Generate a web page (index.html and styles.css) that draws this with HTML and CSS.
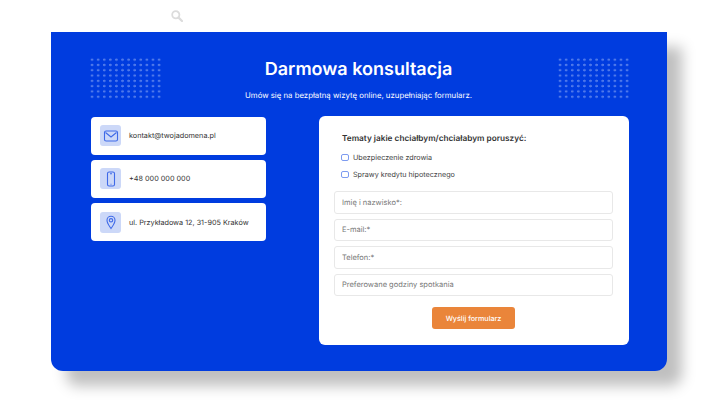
FILE: index.html
```html
<!DOCTYPE html>
<html lang="pl">
<head>
  <meta charset="UTF-8" />
  <title>Darmowa konsultacja</title>
  <link rel="stylesheet" href="styles.css">
</head>
<body>
  <header class="topbar">
    <svg class="search-icon" viewBox="0 0 12 12" width="12" height="12" fill="none" stroke="#dcdcdc">
      <circle cx="4.8" cy="4.8" r="3.6" stroke-width="1.8" />
      <path d="M7.6 7.6 L11 11" stroke-width="2.2" stroke-linecap="round" />
    </svg>
  </header>

  <section class="panel">
    <div class="dots dots-left"></div>
    <div class="dots dots-right"></div>

    <div class="intro">
      <h1>Darmowa konsultacja</h1>
      <p>Umów się na bezpłatną wizytę online, uzupełniając formularz.</p>
    </div>

    <div class="columns">
      <div class="contacts">
        <div class="contact-card">
          <span class="contact-icon">
            <svg viewBox="0 0 20 20" width="20" height="20" fill="none" stroke="#3f6ae8" stroke-width="1.1">
              <rect x="3.5" y="5" width="13" height="10" rx="1.6" />
              <path d="M4.5 6.5 L10 11 L15.5 6.5" />
            </svg>
          </span>
          <span>kontakt@twojadomena.pl</span>
        </div>
        <div class="contact-card">
          <span class="contact-icon">
            <svg viewBox="0 0 20 20" width="20" height="20" fill="none" stroke="#3f6ae8" stroke-width="1.1">
              <rect x="6.5" y="3" width="7" height="14" rx="1.6" />
              <path d="M9 4.8 H11 M9.6 15.2 H10.4" />
            </svg>
          </span>
          <span>+48 000 000 000</span>
        </div>
        <div class="contact-card">
          <span class="contact-icon">
            <svg viewBox="0 0 20 20" width="20" height="20" fill="none" stroke="#3f6ae8" stroke-width="1.1">
              <path d="M10 16.5 C8 13.6 6 11.3 6 8.3 A4 4 0 0 1 14 8.3 C14 11.3 12 13.6 10 16.5 Z" />
              <circle cx="10" cy="8.3" r="1.7" />
            </svg>
          </span>
          <span>ul. Przykładowa 12, 31-905 Kraków</span>
        </div>
      </div>

      <form class="form-card">
        <h2>Tematy jakie chciałbym/chciałabym poruszyć:</h2>
        <label class="check-row"><input type="checkbox"> Ubezpieczenie zdrowia</label>
        <label class="check-row"><input type="checkbox"> Sprawy kredytu hipotecznego</label>
        <div class="fields">
          <input type="text" placeholder="Imię i nazwisko*:">
          <input type="text" placeholder="E-mail:*">
          <input type="text" placeholder="Telefon:*">
          <input type="text" placeholder="Preferowane godziny spotkania">
        </div>
        <button type="submit">Wyślij formularz</button>
      </form>
    </div>
  </section>
</body>
</html>
```

FILE: styles.css
```css
html, body {
  height: 400px;
  overflow: hidden;
}
body {
  margin: 0;
  background-color: #fff;
  font-family: Inter, "Liberation Sans", sans-serif;
  color: #333;
  text-rendering: geometricPrecision;
}
.topbar {
  height: 32px;
  padding: 10px 0 0 171px;
  box-sizing: border-box;
}
.search-icon {
  display: block;
}
.panel {
  position: relative;
  box-sizing: border-box;
  width: 616px;
  height: 339px;
  margin-left: 51px;
  padding: 27px 38px 0 40px;
  background-color: #003cdf;
  border-radius: 0 0 12px 12px;
  box-shadow: 15px 15px 14px rgba(0, 0, 0, 0.25);
}
.dots {
  position: absolute;
  top: 25px;
  width: 73.2px;
  height: 42.4px;
  background-image: radial-gradient(circle at center, #4f79ea 1px, transparent 1.5px);
  background-size: 6.1px 5.3px;
}
.dots-left {
  left: 38px;
}
.dots-right {
  left: 506px;
}
.intro {
  position: relative;
  margin-right: 3px;
  text-align: center;
  color: #fff;
}
.intro h1 {
  margin: 0;
  font-size: 18px;
  line-height: 22px;
  font-weight: 600;
}
.intro p {
  margin: 7px 0 0;
  font-size: 7.8px;
  line-height: 14px;
}
.columns {
  display: flex;
  justify-content: space-between;
  align-items: flex-start;
  margin-top: 14px;
}
.contacts {
  display: flex;
  flex-direction: column;
  gap: 5.3px;
  width: 175px;
  margin-top: 0.5px;
}
.contact-card {
  display: flex;
  align-items: center;
  gap: 8px;
  height: 38px;
  padding-left: 9px;
  background-color: #fff;
  border-radius: 4px;
  font-size: 7.25px;
}
.contact-icon {
  display: flex;
  align-items: center;
  justify-content: center;
  width: 21px;
  height: 21px;
  background-color: #ccd8f8;
  border-radius: 3px;
}
.form-card {
  display: flex;
  flex-direction: column;
  box-sizing: border-box;
  width: 310px;
  height: 229px;
  padding: 16px 16px 0 15px;
  background-color: #fff;
  border-radius: 6px;
}
.form-card h2 {
  margin: 0 0 4px 8px;
  font-size: 8.25px;
  line-height: 13px;
  font-weight: 600;
}
.check-row {
  display: flex;
  align-items: center;
  gap: 4.5px;
  height: 17px;
  margin-left: 7px;
  font-size: 7.2px;
  color: #444;
}
.check-row input {
  appearance: none;
  width: 7.5px;
  height: 7.5px;
  margin: 0;
  border: 1px solid #7d9bf0;
  border-radius: 2px;
}
.fields {
  display: flex;
  flex-direction: column;
  gap: 5px;
  margin-top: 8px;
}
.fields input {
  box-sizing: border-box;
  height: 22.5px;
  padding: 0 7px;
  border: 1px solid #e8e8e8;
  border-radius: 3px;
  font-family: inherit;
  font-size: 7.5px;
  text-rendering: geometricPrecision;
}
.fields input::placeholder {
  color: #777;
  opacity: 1;
}
.form-card button {
  align-self: center;
  width: 83px;
  height: 22px;
  margin-top: 11px;
  padding: 0;
  background-color: #ea853a;
  color: #fff;
  border: none;
  border-radius: 3px;
  font-family: inherit;
  font-size: 7.2px;
  font-weight: 500;
  text-rendering: geometricPrecision;
}
```
